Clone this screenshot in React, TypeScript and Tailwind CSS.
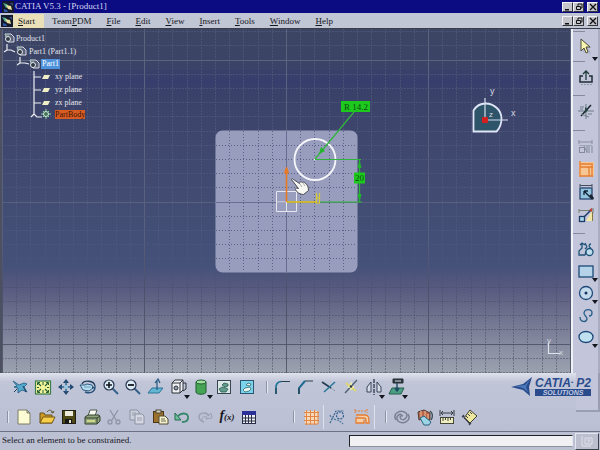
import type { ReactNode } from 'react';

const serif = "font-['Liberation_Serif',serif]";

/* ---------- shared pieces ---------- */

function Glyph({ children }: { children: ReactNode }) {
  return (
    <svg viewBox="0 0 18 18" className="h-[18px] w-[18px]" fill="none" aria-hidden="true">
      {children}
    </svg>
  );
}

type ToolDef = { label: string; icon: ReactNode; menu?: boolean };

function Tool({ label, icon, menu, className = '' }: ToolDef & { className?: string }) {
  return (
    <button type="button" aria-label={label} title={label} className={`relative flex items-center justify-center ${className}`}>
      <Glyph>{icon}</Glyph>
      {menu && (
        <svg viewBox="0 0 6 4" className="absolute right-0 bottom-0 h-[4px] w-[6px]" aria-hidden="true">
          <path d="M0 0h6L3 4z" fill="#14161f" />
        </svg>
      )}
    </button>
  );
}

function Grip() {
  return <div className="mx-1 h-3 w-[2px] border-l border-[#8e92a5] bg-[#e6e9f3]" />;
}

/* ---------- icons ---------- */

const cursorIcon = (
  <>
    <path d="M6 2v12l3-3 3 5 2-1-3-5h4z" fill="#aeb2c4" />
    <path d="M4 1v12l3-3 2 5 2-1-2-5h4z" fill="#fbf7b0" stroke="#4b4a3a" />
  </>
);
const exitIcon = (
  <>
    <path d="M9 12V3M6 6l3-3 3 3" stroke="#1f3a3c" strokeWidth="1.3" />
    <path d="M6 8H3v6h12V8h-3" stroke="#1e2e33" strokeWidth="1.5" />
    <path d="M4 16.5h11" stroke="#9298aa" strokeDasharray="2 1" />
  </>
);
const axisIcon = (
  <>
    <path d="M1 9h16M9 2v15" stroke="#6d7a86" />
    <path d="M4 14L14 3" stroke="#1b2b30" strokeWidth="1.6" />
    <path d="M3 5h4M3 7h3M11 12h4M4 12l8 3" stroke="#71808c" />
    <path d="M8 5l3 3-3 3z" fill="#24413d" />
  </>
);
const dialogConstraintIcon = (
  <>
    <path d="M2 3v4M15 3v4M2 5h13" stroke="#888e9e" />
    <path d="M2 8.500h13" stroke="#a2a7b5" />
    <rect x="2.500" y="10.500" width="5" height="5" stroke="#858b9b" />
    <path d="M10 9v7M12 9v7M15 9v7M7 9l3 6" stroke="#858b9b" />
  </>
);
const constraintIcon = (
  <>
    <rect x="2" y="2" width="15" height="14" fill="#f6c795" />
    <path d="M3 1v16M15 5v12M3 4h13M3 7h9v9M3 16h13M12 7h4" stroke="#e67d31" strokeWidth="1.3" />
  </>
);
const animateIcon = (
  <>
    <path d="M3 1v3M15 1v3M3 2.500h12" stroke="#46515f" />
    <rect x="3" y="5" width="12" height="11" fill="#93c4de" stroke="#1d3a66" strokeWidth="1.2" />
    <path d="M7 8l8 8M7 8v4M7 8h4" stroke="#102038" strokeWidth="1.3" />
    <path d="M12 13l4 4 1-2-3-4z" fill="#1b2430" />
  </>
);
const autoConstraintIcon = (
  <>
    <path d="M2 3v4M16 2v5M2 4.500h11" stroke="#76806f" />
    <path d="M9 15h6V5z" fill="#f2e7a6" />
    <path d="M7 11l8-8" stroke="#1d3a66" strokeWidth="1.500" />
    <rect x="2.500" y="10.500" width="5" height="5" fill="#a9d9ec" stroke="#1d3a66" strokeWidth="1.3" />
    <path d="M12 4l3-2v4z" fill="#c84030" />
    <path d="M15.500 6v9" stroke="#86764c" />
  </>
);
const profileIcon = (
  <>
    <path d="M8 15H2v-4l3-3V3M3 5l2-2 3 2M10 7l-2 2M8 3l2 4" stroke="#1f5279" strokeWidth="1.3" />
    <path d="M8 15c1-1 0-3 1-4M14 8c-3-1-2-4 0-4" stroke="#1f5279" strokeWidth="1.3" />
    <circle cx="12.500" cy="12" r="3.500" fill="#bcdbec" stroke="#1f5279" strokeWidth="1.3" />
  </>
);
const rectIcon = <rect x="2" y="4" width="14" height="11" fill="#b5d3e8" stroke="#1d4a78" strokeWidth="1.3" />;
const circleIcon = (
  <>
    <circle cx="9" cy="9" r="6.500" fill="#c4d9ea" stroke="#1d4a78" strokeWidth="1.3" />
    <circle cx="9" cy="9" r="1.500" fill="#123660" />
  </>
);
const splineIcon = <path d="M3 11c0 5 6 6 7 2 0-3-3-3-3-6 1-5 8-4 8 0 0 2-1 3-3 3" stroke="#285f88" strokeWidth="1.3" />;
const ellipseIcon = <ellipse cx="9" cy="9" rx="7" ry="5.500" fill="#bfe0ee" stroke="#1d4a78" strokeWidth="1.3" />;

const flyIcon = (
  <>
    <path d="M2 3l6 4 5-2 3 1-3 3 3 5-5-2-4 3 0-5-4-1 3-1z" fill="#54aace" stroke="#1f587e" strokeWidth=".8" />
    <path d="M3 14l3-3M12 8l3 6" stroke="#183a59" />
  </>
);
const fitIcon = (
  <>
    <rect x="1.500" y="3" width="15" height="13" fill="#f4f49a" stroke="#3b7d4c" strokeWidth="1.2" />
    <path d="M4 5l3 3M14 5l-3 3M4 14l3-3M14 14l-3-3" stroke="#275f39" strokeWidth="1.200" />
    <path d="M3.500 7V4.500H6M12 4.500h2.500V7M3.500 12v2.500H6M12 14.500h2.500V12M9 4v3M9 12v3M3 9.500h2M13 9.500h2" stroke="#275f39" />
  </>
);
const panIcon = (
  <>
    <path d="M9 1l3 4H6zM9 17l3-4H6zM1 9l4-3v6zM17 9l-4-3v6z" fill="#20466f" />
    <path d="M9 4v10M4 9h10" stroke="#31658e" strokeWidth="1.500" />
    <circle cx="9" cy="9" r="2" fill="#9cc9e2" />
  </>
);
const rotateIcon = (
  <>
    <path d="M3 6c2-4 12-4 13 2" stroke="#1e3c5b" strokeWidth="1.3" />
    <path d="M1 7h5l2-1 5 1 1 3-4 3-6-1z" fill="#b7def0" stroke="#2c5c80" />
    <path d="M6 14c5 2 10 0 10-5l-3 1" stroke="#27527a" strokeWidth="1.4" />
    <path d="M5 9h7" stroke="#5d8cab" strokeWidth=".8" />
  </>
);
const zoomInIcon = (
  <>
    <path d="M10 10l6 6" stroke="#34628a" strokeWidth="2" />
    <circle cx="7" cy="7" r="5" fill="#dcecf5" stroke="#26344e" strokeWidth="1.2" />
    <path d="M7 4v6M4 7h6" stroke="#11151f" strokeWidth="1.600" />
  </>
);
const zoomOutIcon = (
  <>
    <path d="M10 10l6 6" stroke="#34628a" strokeWidth="2" />
    <circle cx="7" cy="7" r="5" fill="#dcecf5" stroke="#26344e" strokeWidth="1.2" />
    <path d="M4 7h6" stroke="#11151f" strokeWidth="1.800" />
  </>
);
const normalViewIcon = (
  <>
    <path d="M5 10h11l-4 5H1z" fill="#63b6d4" stroke="#2d7799" />
    <path d="M10 12V3M8 5l3-4 2 4" stroke="#24567f" strokeWidth="1.200" />
  </>
);
const isoViewIcon = (
  <>
    <path d="M2 5l3-3h8v10l-3 3H2z" fill="#f1f2f6" stroke="#2a3038" />
    <path d="M2 5h8v10M10 5l3-3" stroke="#2a3038" />
    <circle cx="6" cy="10" r="2" fill="#9aa2b0" stroke="#2a3038" />
    <path d="M13 5h3v6l-3 2" stroke="#2a3038" />
  </>
);
const shadingIcon = (
  <>
    <path d="M4 4v10c0 3 10 3 10 0V4z" fill="#46a455" stroke="#1d5b2e" />
    <ellipse cx="9" cy="4" rx="5" ry="2" fill="#a1dfa0" stroke="#1d5b2e" />
  </>
);
const hideIcon = (
  <>
    <rect x="2.500" y="2.500" width="13" height="13" fill="#dbe7e6" stroke="#37464f" />
    <path d="M7 7l2-2 4 1v2l-3 1zM4 11l3-2 4 1 2 1-2 3H6z" fill="#5f9c8c" stroke="#2b5a51" strokeWidth=".8" />
  </>
);
const swapIcon = (
  <>
    <rect x="2.500" y="2.500" width="13" height="13" fill="#7cd3ec" stroke="#2a5671" />
    <path d="M5 12l2-2 5-1 1 2-2 2-4 1zM8 7l2-2 3 1-1 2z" fill="#e9f6ee" stroke="#2e6a75" strokeWidth=".8" />
  </>
);
const cornerIcon = (
  <>
    <path d="M2 16V9c0-3 2-5 5-5.500" stroke="#1d7295" strokeWidth="1.700" />
    <path d="M7 3.500h9M2 10v6" stroke="#29424f" strokeWidth="1.200" />
  </>
);
const chamferIcon = (
  <>
    <path d="M2 16v-6l6-7" stroke="#1f6b92" strokeWidth="2" />
    <path d="M8 3h8M2 10v6" stroke="#29424f" strokeWidth="1.200" />
  </>
);
const trimIcon = (
  <>
    <path d="M2 4l9 6" stroke="#223c50" strokeWidth="1.600" />
    <path d="M15 4L4 14" stroke="#2a779a" strokeWidth="1.500" />
    <path d="M11 10l4 3" stroke="#7d93a5" strokeDasharray="2 1" />
  </>
);
const breakIcon = (
  <>
    <path d="M4 5l10 8" stroke="#ded76a" strokeWidth="2" />
    <path d="M15 2L3 15" stroke="#475b69" strokeWidth="1.200" />
    <path d="M9 4v8M6 9h6" stroke="#f5f0a5" strokeWidth="1.400" />
    <circle cx="9" cy="8.500" r="1.200" fill="#24323b" />
  </>
);
const mirrorIcon = (
  <>
    <path d="M9 1v16" stroke="#212b3e" strokeDasharray="4 1" strokeWidth="1.200" />
    <path d="M6 4v10H2v-5zM12 4v10h4v-5z" fill="#d7dbe7" stroke="#38445a" />
  </>
);
const projectIcon = (
  <>
    <path d="M5 1h10v4H5z" fill="#343d44" stroke="#222b33" />
    <path d="M7 3h6" stroke="#cfd6dc" />
    <path d="M4 10h12l-3 6H1z" fill="#4c9d83" stroke="#24604d" />
    <path d="M9 5v7M7 10l2 3 2-3" stroke="#1b4a62" strokeWidth="1.400" />
  </>
);

const newIcon = <path d="M3 2h9l3 3v11H3zM12 2v3h3" fill="#fdfbd3" stroke="#7d7c68" />;
const openIcon = (
  <>
    <path d="M2 15V5h4l1 2h7v8z" fill="#cf9b22" stroke="#68501a" />
    <path d="M2 15l3-6h12l-3 6z" fill="#f6ce4a" stroke="#765818" />
    <path d="M9 4c2-3 5-2 6 1M13 4l2 1 1-2" stroke="#5f5630" />
  </>
);
const saveIcon = (
  <>
    <rect x="2.500" y="2.500" width="13" height="13" fill="#4e4a18" stroke="#211f12" />
    <rect x="5" y="3" width="8" height="5" fill="#eceadc" />
    <rect x="5" y="11" width="7" height="5" fill="#18181a" />
    <rect x="9" y="12" width="2" height="3" fill="#e6e3c8" />
  </>
);
const printIcon = (
  <>
    <path d="M5 8l2-6h7l-2 6z" fill="#fafaf2" stroke="#4d5b4d" />
    <path d="M2 9l3-2h11l1 2v4l-3 3H2z" fill="#8fa37d" stroke="#34432f" />
    <path d="M2 10h12l3-2M14 10v6" stroke="#34432f" />
    <path d="M4 13h8" stroke="#e5e78b" strokeWidth="1.500" />
  </>
);
const cutIcon = (
  <>
    <path d="M5 2l6 10M13 2L7 12" stroke="#9095a6" strokeWidth="1.300" />
    <circle cx="5" cy="14" r="2" stroke="#9095a6" strokeWidth="1.300" />
    <circle cx="13" cy="14" r="2" stroke="#9095a6" strokeWidth="1.300" />
  </>
);
const copyIcon = (
  <>
    <path d="M2 2h7l2 2v8H2z" fill="#cbcedb" stroke="#8c91a2" />
    <path d="M7 6h7l2 2v8H7z" fill="#d5d8e3" stroke="#8c91a2" />
    <path d="M4 5h4M4 7h3M9 10h5M9 12h5" stroke="#989dad" />
  </>
);
const pasteIcon = (
  <>
    <rect x="2.500" y="3.500" width="10" height="11" fill="#9b712b" stroke="#4a3516" />
    <rect x="5" y="2" width="5" height="3" fill="#d8d6bd" stroke="#4c473b" />
    <path d="M8 8h6l3 3v5H8z" fill="#f4f1cf" stroke="#504d36" />
    <path d="M10 11h4M10 13h5" stroke="#6c6a4d" />
  </>
);
const undoIcon = (
  <>
    <path d="M5 8c4-4 11-3 10 2 0 3-3 4-6 4" stroke="#328768" strokeWidth="1.800" />
    <path d="M2 5v7h6z" fill="#6dc29d" stroke="#27684f" />
  </>
);
const redoIcon = (
  <>
    <path d="M13 8C10 3 3 5 3 9c0 3 2 4 5 5" stroke="#9ca1b1" strokeWidth="1.500" />
    <path d="M6 13c-1-4 3-5 5-4l-1 2 6-1-1-5-2 2" stroke="#9ca1b1" />
  </>
);
const tableIcon = (
  <>
    <rect x="2.500" y="3.500" width="13" height="12" fill="#eef0f6" stroke="#252a46" />
    <rect x="2" y="3" width="14" height="4" fill="#2b2f98" />
    <path d="M5.500 7v9M8.500 7v9M11.500 7v9M2 10h14M2 13h14" stroke="#2b3045" />
  </>
);
const gridIcon = (
  <>
    <rect x="3" y="3" width="13" height="13" fill="#f7d9b9" />
    <path d="M4.500 2v15M8.500 2v15M12.500 2v15M2 4.500h15M2 8.500h15M2 12.500h15M16 3v13M3 16h13" stroke="#e08543" />
  </>
);
const constructionIcon = (
  <>
    <path d="M2 15L8 3h8" stroke="#345f8b" strokeWidth="1.200" strokeDasharray="2 1" />
    <circle cx="12" cy="7.500" r="3.500" stroke="#2f5b8c" strokeWidth="1.200" strokeDasharray="2 1" />
    <path d="M2 7c2 6 8 3 13 9" stroke="#4e7aa0" strokeWidth="1.200" strokeDasharray="2 1" />
  </>
);
const dimensionIcon = (
  <>
    <path d="M2 1v4M14 1v4M2 3h12" stroke="#e67d31" strokeDasharray="2 1" />
    <path d="M3 7h9c4 0 4 3 4 8h-3v-3c0-1-1-2-2-2H3v5h8v-3" fill="#f6cfa6" stroke="#e67d31" strokeWidth="1.300" />
  </>
);
const updateIcon = (
  <>
    <path d="M3 12C-1 5 8 1 13 5c3 4-2 8-5 6-2-2 0-4 2-3" stroke="#7b8193" strokeWidth="1.500" />
    <path d="M15 6c4 7-5 11-10 7C2 9 6 5 9 7" stroke="#7b8193" strokeWidth="1.500" />
  </>
);
const manipulateIcon = (
  <>
    <path d="M2 4l6-2 6 3v7l-5-2-6 2z" fill="#b8674a" stroke="#4e3a33" />
    <path d="M5 3v8M9 3v8M12 6v6" stroke="#f1c29c" />
    <path d="M4 10l4-2 7 6-2 3H8z" fill="#9dd4e6" stroke="#28617e" />
    <path d="M14 3c3 2 3 6 1 9" stroke="#31474f" strokeWidth="1.300" />
  </>
);
const measureIcon = (
  <>
    <path d="M2 2v6M16 2v6M3 5h12M5 3L3 5l2 2M13 3l2 2-2 2" stroke="#343942" />
    <rect x="2.500" y="9.500" width="13" height="6" fill="#efeec0" stroke="#444637" />
    <path d="M5 10v3M7.500 10v2M10 10v3M12.500 10v2" stroke="#444637" />
  </>
);
const measureItemIcon = (
  <>
    <path d="M9 2l7 6-7 7-6-5z" fill="#efe9a0" stroke="#3d3f35" />
    <path d="M2 8l7 8M1 9l2-2M8 17l2-2" stroke="#3b3f4b" strokeWidth="1.200" />
    <path d="M5 8l2 2M7 6l2 2M9 4l2 2" stroke="#3b3f4b" />
  </>
);

/* ---------- data ---------- */

const menus: [string, string, string][] = [
  ['', 'S', 'tart'],
  ['Team', 'P', 'DM'],
  ['', 'F', 'ile'],
  ['', 'E', 'dit'],
  ['', 'V', 'iew'],
  ['', 'I', 'nsert'],
  ['', 'T', 'ools'],
  ['', 'W', 'indow'],
  ['', 'H', 'elp'],
];

const viewTools: ToolDef[] = [
  { label: 'Fly mode', icon: flyIcon },
  { label: 'Fit all in', icon: fitIcon },
  { label: 'Pan', icon: panIcon },
  { label: 'Rotate', icon: rotateIcon },
  { label: 'Zoom in', icon: zoomInIcon },
  { label: 'Zoom out', icon: zoomOutIcon },
  { label: 'Normal view', icon: normalViewIcon },
  { label: 'Isometric view', icon: isoViewIcon, menu: true },
  { label: 'Shading', icon: shadingIcon, menu: true },
  { label: 'Hide or show', icon: hideIcon },
  { label: 'Swap visible space', icon: swapIcon },
];

const operationTools: ToolDef[] = [
  { label: 'Corner', icon: cornerIcon },
  { label: 'Chamfer', icon: chamferIcon },
  { label: 'Trim', icon: trimIcon },
  { label: 'Break', icon: breakIcon },
  { label: 'Mirror', icon: mirrorIcon, menu: true },
  { label: 'Project 3D elements', icon: projectIcon, menu: true },
];

const standardTools: ToolDef[] = [
  { label: 'New', icon: newIcon },
  { label: 'Open', icon: openIcon },
  { label: 'Save', icon: saveIcon },
  { label: 'Print', icon: printIcon },
  { label: 'Cut', icon: cutIcon },
  { label: 'Copy', icon: copyIcon },
  { label: 'Paste', icon: pasteIcon },
  { label: 'Undo', icon: undoIcon },
  { label: 'Redo', icon: redoIcon },
];

const measureTools: ToolDef[] = [
  { label: 'Update', icon: updateIcon },
  { label: 'Manipulate', icon: manipulateIcon },
  { label: 'Measure between', icon: measureIcon },
  { label: 'Measure item', icon: measureItemIcon },
];

const constraintTools: ToolDef[] = [
  { label: 'Constraints in dialog', icon: dialogConstraintIcon },
  { label: 'Constraint', icon: constraintIcon },
  { label: 'Animate constraint', icon: animateIcon },
  { label: 'Auto constraint', icon: autoConstraintIcon },
];

const profileTools: ToolDef[] = [
  { label: 'Profile', icon: profileIcon },
  { label: 'Rectangle', icon: rectIcon, menu: true },
  { label: 'Circle', icon: circleIcon, menu: true },
  { label: 'Spline', icon: splineIcon },
  { label: 'Ellipse', icon: ellipseIcon, menu: true },
];

/* ---------- window chrome ---------- */

function AppIcon() {
  return (
    <svg viewBox="0 0 12 12" className="h-3 w-3 shrink-0" aria-hidden="true">
      <rect width="12" height="12" fill="#15192e" />
      <path d="M1 2l4 1 2 3-3 1z" fill="#4fa58d" />
      <path d="M4 4l5 1 1 4-4-1z" fill="#e8df9c" />
      <path d="M2 8l3 1 1 2H2z" fill="#2e57a8" />
      <path d="M8 2h3v3z" fill="#3c4a7e" />
    </svg>
  );
}

const captionButton =
  'flex h-[10px] w-[11px] items-center justify-center border border-t-[#f3f3f6] border-r-[#33343c] border-b-[#33343c] border-l-[#f3f3f6] bg-[#c4c5cb]';

function CaptionButtons() {
  return (
    <div className="flex pr-[2px]">
      <button type="button" aria-label="Minimize" className={captionButton}>
        <svg viewBox="0 0 8 8" className="h-2 w-2"><path d="M1 6h4v1.500H1z" fill="#111" /></svg>
      </button>
      <button type="button" aria-label="Restore" className={captionButton}>
        <svg viewBox="0 0 8 8" className="h-2 w-2" fill="none" stroke="#111">
          <path d="M3 3V1h4v4H5" />
          <path d="M1.500 3.500h4v3h-4z" />
        </svg>
      </button>
      <button type="button" aria-label="Close" className={`ml-[3px] ${captionButton}`}>
        <svg viewBox="0 0 8 8" className="h-2 w-2"><path d="M1 1l6 6M7 1L1 7" stroke="#111" strokeWidth="1.300" /></svg>
      </button>
    </div>
  );
}

/* ---------- specification tree ---------- */

function PartGlyph() {
  return (
    <svg viewBox="0 0 12 12" className="h-3 w-3 shrink-0" fill="none" aria-hidden="true">
      <path d="M2 2h6l3 3v5H5z" fill="#596079" stroke="#d9dce4" />
      <circle cx="5" cy="7" r="2.500" fill="#2e3b45" stroke="#e8eaee" />
      <path d="M2 3h4" stroke="#81b09b" />
    </svg>
  );
}

function SpecTree() {
  const planes = ['xy plane', 'yz plane', 'zx plane'];
  return (
    <div className={`absolute top-[3px] left-0 text-[8px] leading-[13px] text-[#e3e5ec] ${serif}`}>
      <svg viewBox="0 0 60 94" className="absolute top-0 left-0 h-[94px] w-[60px]" fill="none" stroke="#eceef2" strokeWidth="1.200" aria-hidden="true">
        <path d="M5 12v6M5 18l-3 2M5 18h4l4 2M18 25v6M18 31l-3 2M18 31h5l4 1M32 39v43M32 45h7M32 58h7M32 71h7M32 82l-3 3M32 82l3 3h5" />
      </svg>
      <ul>
        <li>
          <div className="flex gap-px pl-px"><PartGlyph />Product1</div>
          <ul>
            <li>
              <div className="flex gap-[2px] pl-[13px]"><PartGlyph />Part1 (Part1.1)</div>
              <ul>
                <li>
                  <div className="flex gap-px pl-[26px]">
                    <PartGlyph />
                    <span className="h-[10px] self-center bg-[#4f92dc] px-px leading-[10px] text-white">Part1</span>
                  </div>
                  <ul>
                    {planes.map((name) => (
                      <li key={name} className="flex items-center gap-[5px] pl-[40px]">
                        <svg viewBox="0 0 8 4" className="h-1 w-2" aria-hidden="true"><path d="M2 0h6L6 4H0z" fill="#efeec6" /></svg>
                        {name}
                      </li>
                    ))}
                    <li className="flex items-center gap-[4px] pl-[39px]">
                      <svg viewBox="0 0 10 10" className="h-[10px] w-[10px]" fill="none" aria-hidden="true">
                        <path d="M5 0v10M0 5h10M2 2l6 6M8 2L2 8" stroke="#8fd3a6" />
                        <circle cx="5" cy="5" r="2.500" fill="#49705e" stroke="#c6f0d0" />
                      </svg>
                      <span className="h-[9px] bg-[#d85c22] leading-[9px] text-[#3a1408]">PartBody</span>
                    </li>
                  </ul>
                </li>
              </ul>
            </li>
          </ul>
        </li>
      </ul>
    </div>
  );
}

/* ---------- sketch canvas ---------- */

const CX = 286.5;
const CY = 202;
const STEP = 14.2;

function Sketch() {
  const columns = Array.from({ length: 41 }, (_, i) => i - 20);
  const rows = Array.from({ length: 25 }, (_, i) => i - 12);
  const inner = [-4, -3, -2, -1, 0, 1, 2, 3, 4];
  return (
    <svg viewBox="2 29 569 344" preserveAspectRatio="xMidYMid slice" className="absolute inset-0 h-full w-full" fill="none" role="img" aria-label="Sketch with constrained circle">
      <defs>
        <linearGradient id="sky" x1="0" y1="0" x2="0" y2="1">
          <stop offset="0" stopColor="#3d4564" />
          <stop offset=".1" stopColor="#3b4467" />
          <stop offset=".15" stopColor="#373e6d" />
          <stop offset=".2" stopColor="#3b4269" />
          <stop offset=".45" stopColor="#414b72" />
          <stop offset=".69" stopColor="#455179" />
          <stop offset=".76" stopColor="#5a5b80" />
          <stop offset=".84" stopColor="#70738e" />
          <stop offset=".92" stopColor="#888ca1" />
          <stop offset="1" stopColor="#9ba2ae" />
        </linearGradient>
        <linearGradient id="minor" gradientUnits="userSpaceOnUse" x1="0" y1="29" x2="0" y2="373">
          <stop offset="0" stopColor="#505a78" />
          <stop offset=".6" stopColor="#4f5a80" />
          <stop offset=".75" stopColor="#4a4f70" />
          <stop offset="1" stopColor="#5d6375" />
        </linearGradient>
        <linearGradient id="major" gradientUnits="userSpaceOnUse" x1="0" y1="29" x2="0" y2="373">
          <stop offset="0" stopColor="#606880" />
          <stop offset=".6" stopColor="#5a627e" />
          <stop offset=".75" stopColor="#4c5069" />
          <stop offset="1" stopColor="#505566" />
        </linearGradient>
      </defs>
      <rect x="-200" y="29" width="1000" height="344" fill="url(#sky)" />
      <g shapeRendering="crispEdges">
        {columns.map((k) => (
          <path key={k} d={`M${CX + k * STEP} 29V373`} stroke={k % 10 === 0 ? 'url(#major)' : 'url(#minor)'} strokeOpacity={k % 10 === 0 ? 0.9 : 0.7} strokeDasharray={k % 10 === 0 ? undefined : '2 1'} />
        ))}
        {rows.map((k) => (
          <path key={k} d={`M2 ${CY + k * STEP}H571`} stroke={k % 10 === 0 ? 'url(#major)' : 'url(#minor)'} strokeOpacity={k % 10 === 0 ? 0.9 : 0.7} strokeDasharray={k % 10 === 0 ? undefined : '2 1'} />
        ))}
      </g>
      <rect x="215.500" y="130.500" width="142" height="142" rx="7" fill="#989dbe" />
      <g shapeRendering="crispEdges" stroke="#5c6187">
        {inner.map((k) => (
          <path key={k} d={`M${CX + k * STEP} 131V272M216 ${CY + k * STEP}H357`} strokeDasharray={k === 0 ? undefined : '1 2'} strokeOpacity={k === 0 ? 0.8 : 1} />
        ))}
      </g>

      <path d="M276.500 191.500h20v20h-20zM286.500 202v9.500M276.500 202h10" stroke="#e6e6ee" />
      <path d="M286.500 202V170" stroke="#e87a26" strokeWidth="1.600" />
      <path d="M284.500 173l2-6 2 6z" fill="#e87a26" stroke="#e87a26" />
      <path d="M287 202h30" stroke="#d3bb28" strokeWidth="1.800" />
      <path d="M316.500 193v10h3v-10M316 198h4" stroke="#d9cb32" strokeWidth="1.200" />

      <circle cx="315" cy="159.500" r="20.500" stroke="#f5f6fa" strokeWidth="1.800" />
      <circle cx="315" cy="159.500" r="1" fill="#fff" />
      <path d="M354 112l-39 47M315 159.500h46M320 202h42M359.500 160v42" stroke="#2fb53a" strokeWidth="1.200" />
      <path d="M319 154l2-7 4 4zM359.500 160l-2 8h4zM359.500 202l-2-8h4z" fill="#22b52c" />
      <rect x="341" y="101" width="29" height="11" fill="#1ec91e" />
      <text x="344" y="110" fontSize="9" fill="#0c4a10" className={serif}>R 14.2</text>
      <rect x="354" y="172.500" width="11" height="11" fill="#1ec91e" />
      <text x="355" y="181" fontSize="9" fill="#0c4a10" className={serif}>20</text>

      <path d="M291.500 179.500c0-1 1-1 2 0l6 4c0-2 2-2 3-1 1-1 2 0 3 1 2 1 3 4 3 7l-5 4c-3 0-7-2-8-5 0-1 1-2 2-1l1 0z" fill="#f8f8f2" stroke="#3c3c48" strokeWidth=".9" />
      <path d="M300 184l2 3M303 183l2 3" stroke="#8c8c96" strokeWidth=".7" />

      <path d="M473.500 131.500v-21c3-5 7-7 12-7 9 0 16 7 16 15 0 6-2 10-5 13z" fill="#2d5468" stroke="#dfe5f6" strokeWidth="1.800" />
      <path d="M485 120V98M485 120h23" stroke="#d4dcee" strokeWidth="1.200" />
      <rect x="482" y="117" width="6" height="6" rx="1" fill="#d41f1f" />
      <g fill="#d5d9e4" fontSize="9" className="font-['Liberation_Sans',sans-serif]">
        <text x="490" y="94">y</text>
        <text x="511" y="116">x</text>
        <text x="489" y="117" fontSize="8">z</text>
        <text x="547" y="343" fontSize="8">y</text>
        <text x="559" y="355" fontSize="8">x</text>
      </g>
      <path d="M548.500 343v10.500H560" stroke="#dfe2ea" strokeWidth="1.200" />
    </svg>
  );
}

/* ---------- side toolbar ---------- */

function SideSection({ children }: { children: ReactNode }) {
  return (
    <div className="relative flex flex-col items-center">
      <div className="h-px w-3 self-start bg-[#858a9c]" />
      {children}
    </div>
  );
}

function SideToolbar() {
  return (
    <div role="toolbar" aria-label="Sketch tools" className="flex w-[29px] shrink-0 flex-col border-r-2 border-l-2 border-r-[#a9adc1] border-l-[#eef1f6] bg-[#c3c6da] pt-[2px]">
      <SideSection><Tool label="Select" icon={cursorIcon} menu className="h-[29px] w-6" /></SideSection>
      <SideSection><Tool label="Exit workbench" icon={exitIcon} className="h-[33px] w-6 pb-1" /></SideSection>
      <SideSection><Tool label="Axis" icon={axisIcon} className="h-[34px] w-6 pb-1" /></SideSection>
      <SideSection>
        <div className="flex flex-col pt-[3px] pb-[7px]">
          {constraintTools.map((t) => <Tool key={t.label} {...t} className="h-[23px] w-6" />)}
        </div>
      </SideSection>
      <SideSection>
        <div className="flex flex-col pt-1">
          {profileTools.map((t) => <Tool key={t.label} {...t} className="h-[22px] w-6" />)}
        </div>
      </SideSection>
    </div>
  );
}

/* ---------- brand ---------- */

function Brand() {
  return (
    <div className="relative mr-[9px] flex items-center text-[#2a4c8c] font-['Liberation_Sans',sans-serif]">
      <svg viewBox="0 0 24 22" className="h-[22px] w-6" aria-hidden="true">
        <path d="M0 11l12-3 9-7-3 10 1 9-7-6z" fill="#2a4c8c" />
        <path d="M4 10l10-1 5-6-4 8 2 5-5-4z" fill="#4a78b8" />
      </svg>
      <div className="flex flex-col italic">
        <span className="text-[12px] leading-[12px] font-bold">CATIA<sup className="text-[6px]">•</sup> P2</span>
        <span className="bg-[#2a4c8c] text-center text-[7px] leading-[7px] font-bold text-[#c3cbe2]">SOLUTIONS</span>
      </div>
    </div>
  );
}

/* ---------- application ---------- */

export default function App() {
  return (
    <div className={`flex h-screen flex-col overflow-hidden bg-[#bfc3d6] text-[9px] text-[#16171d] ${serif}`}>
      <header className="flex h-[13px] shrink-0 items-center bg-[#0b0b82] pl-[2px] text-[#d6d9f2]">
        <AppIcon />
        <h1 className="flex-1 pl-px text-[9px] leading-[13px]">CATIA V5.3 - [Product1]</h1>
        <CaptionButtons />
      </header>

      <nav className="flex h-4 shrink-0 items-center border-b border-[#3b3e4b] bg-[#c1c6d5]" aria-label="Main menu">
        <div className="pl-px"><AppIcon /></div>
        <div className="flex flex-1 gap-px">
          {menus.map(([before, key, after], i) => (
            <button key={key + after} type="button" className={`h-[14px] leading-[14px] ${i === 0 ? 'bg-[#e9dfb9] pr-[9px] pl-[5px]' : 'px-[7px]'}`}>
              {before}<span className="underline">{key}</span>{after}
            </button>
          ))}
        </div>
        <CaptionButtons />
      </nav>

      <main className="flex min-h-0 flex-1">
        <section className="relative min-w-0 flex-1 overflow-hidden border-l-2 border-[#4c5060]" aria-label="Model view">
          <Sketch />
          <SpecTree />
        </section>
        <SideToolbar />
      </main>

      <footer className="relative shrink-0 bg-linear-to-b from-[#dfe3ec] via-[#c1c5d8] via-15% to-[#bbbfd3]">
        <div className="absolute top-0 right-0 h-[39px] w-6 border-r-2 border-b-2 border-[#9a9eb3] bg-[#c3c6da]" />
        <div className="relative flex h-[29px] items-center pb-[2px] pl-[9px]">
          <div role="toolbar" aria-label="View" className="grid w-[249px] grid-cols-11">
            {viewTools.map((t) => <Tool key={t.label} {...t} className="h-6" />)}
          </div>
          <div className="pl-1"><Grip /></div>
          <div role="toolbar" aria-label="Operation" className="grid w-[136px] grid-cols-6">
            {operationTools.map((t) => <Tool key={t.label} {...t} className="h-6" />)}
          </div>
          <div className="flex-1" />
          <Brand />
        </div>
        <div className="relative flex h-[29px] items-center pl-[3px]">
          <Grip />
          <div role="toolbar" aria-label="Standard" className="grid w-[203px] grid-cols-9">
            {standardTools.map((t) => <Tool key={t.label} {...t} className="h-6" />)}
          </div>
          <button type="button" aria-label="Formula" className="h-6 w-[22px] text-[14px] leading-[22px] font-bold italic">
            f<span className="text-[9px]">(x)</span>
          </button>
          <Tool label="Design table" icon={tableIcon} className="h-6 w-[22px]" />
          <div className="w-[29px]" />
          <Grip />
          <Tool label="Grid" icon={gridIcon} className="h-6 w-6" />
          <div className="h-6 w-px bg-[#dde1ec]" />
          <div className="flex gap-px pl-px">
            <Tool label="Construction element" icon={constructionIcon} className="h-6 w-6" />
            <Tool label="Dimensional constraints" icon={dimensionIcon} className="h-6 w-6" />
          </div>
          <div className="h-6 w-px bg-[#dde1ec]" />
          <div className="w-[6px]" />
          <Grip />
          <div role="toolbar" aria-label="Measure" className="grid w-[90px] grid-cols-4">
            {measureTools.map((t) => <Tool key={t.label} {...t} className="h-6" />)}
          </div>
        </div>
      </footer>

      <div className="flex h-[19px] shrink-0 items-center border-t border-[#6d7183] bg-[#bcc0d3] pl-[2px]">
        <label htmlFor="command" className="flex-1">Select an element to be constrained.</label>
        <input id="command" type="text" className="h-3 w-[224px] border border-t-[#1f2028] border-r-[#e8e8ee] border-b-[#8b8e9c] border-l-[#1f2028] bg-[#f1f0f2] px-1" />
        <button type="button" aria-label="Power input" className="mr-px ml-[2px] flex h-[17px] w-6 items-center justify-center border border-t-[#e5e7ef] border-r-[#3c3f4c] border-b-[#3c3f4c] border-l-[#e5e7ef] bg-[#bcbfcd]">
          <svg viewBox="0 0 14 12" className="h-3 w-[14px]" fill="none" stroke="#dfe1ea" aria-hidden="true">
            <path d="M2 1v10h9M5 3h7v6H5zM7 5h3l-2 3" />
          </svg>
        </button>
      </div>
    </div>
  );
}
